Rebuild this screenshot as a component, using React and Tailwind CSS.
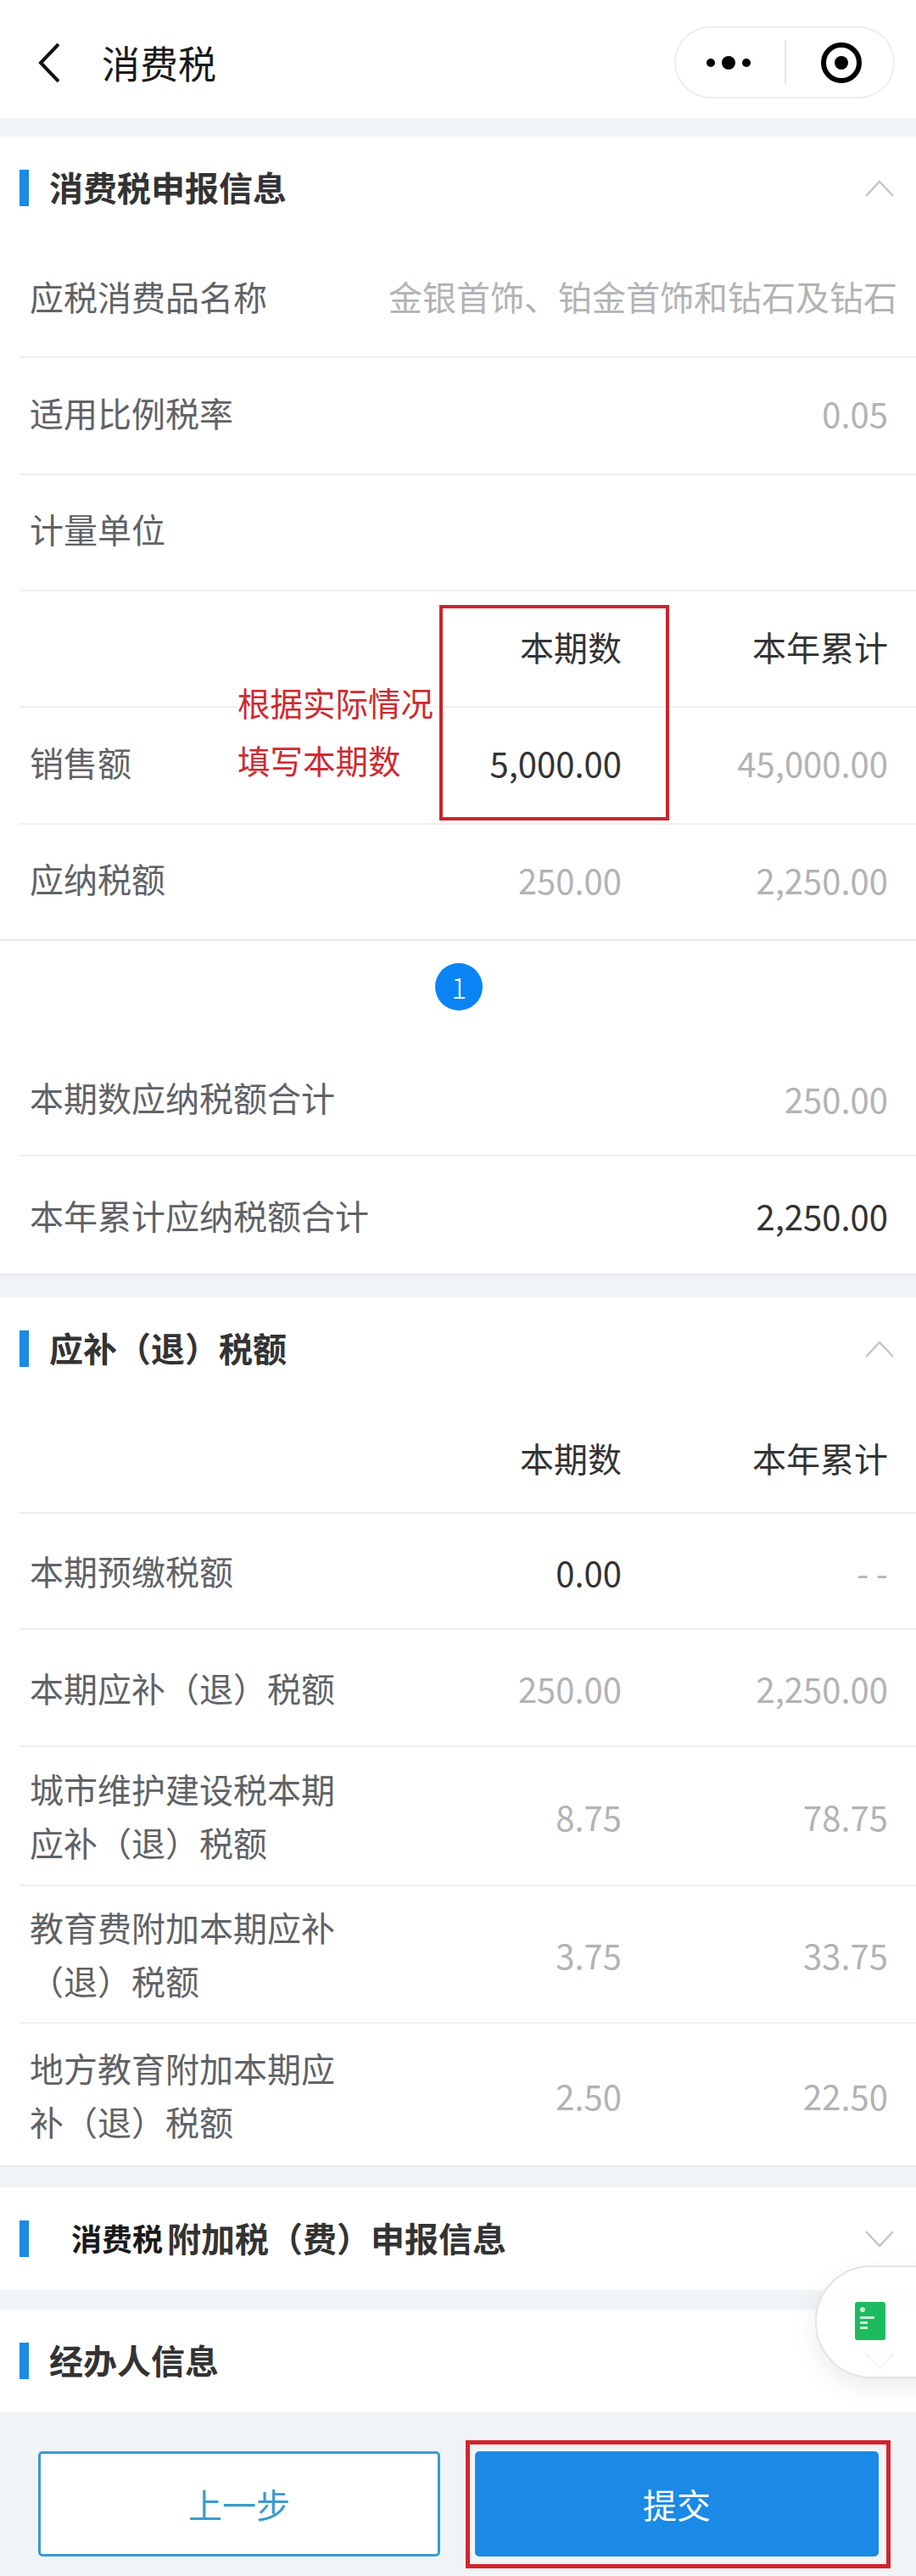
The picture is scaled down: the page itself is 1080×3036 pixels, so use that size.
const tm = { dark: "text-[#333333]", gray: "text-[#b2b3b5]" };

function Chevron({ down }) {
  return (
    <svg width="34" height="20" viewBox="0 0 34 20" fill="none" className="shrink-0">
      <path d={down ? "M1 1 L17 18 L33 1" : "M1 19 L17 2 L33 19"} stroke="#c4c6c8" strokeWidth="2.5" />
    </svg>
  );
}

function SectionHead({ title, down, className = "" }) {
  return (
    <div className={`flex items-center justify-between pl-[23px] pr-[26px] ${className}`}>
      <div className="flex items-center">
        <div className="w-[11px] h-[43px] bg-[#1a8ae6]" />
        <div className="ml-[24px] -mt-[4px] text-[40px] leading-[48px] font-bold text-[#333333]">{title}</div>
      </div>
      <Chevron down={down} />
    </div>
  );
}

function Row({ label, mid, midTone = "gray", right, rightTone = "gray", h = "h-[137px]", last, up, nowrap }) {
  return (
    <div className={`ml-[23px] pl-[12px] pr-[33px] flex items-center ${h} ${up ? "pb-[8px]" : ""} ${last ? "" : "border-b-2 border-[#efefef]"}`}>
      <div className={`w-[362px] mr-[86px] shrink-0 text-[40px] leading-[63px] text-[#606266] ${nowrap ? "whitespace-nowrap" : ""}`}>{label}</div>
      <div className={`w-[250px] shrink-0 text-right text-[40px] pt-[2px] ${tm[midTone]}`}>{mid}</div>
      <div className={`w-[314px] shrink-0 text-right text-[40px] pt-[2px] ${tm[rightTone]}`}>{right}</div>
    </div>
  );
}

export default function App() {
  return (
    <div className="relative w-[1080px] h-[3036px] overflow-hidden bg-[#f0f4f7] font-['Noto_Sans_CJK_SC','Noto_Sans',sans-serif]">
      {/* nav */}
      <div className="h-[139px] bg-white flex items-center justify-between pl-[45px] pr-[25px] pt-[8px]">
        <div className="flex items-center">
          <svg width="26" height="46" viewBox="0 0 26 46" fill="none">
            <path d="M24 1 L3 23 L24 45" stroke="#111111" strokeWidth="4" />
          </svg>
          <div className="ml-[49px] text-[45px] leading-[60px] text-[#1a1a1a]">消费税</div>
        </div>
        <div className="w-[260px] h-[85px] rounded-[43px] border-2 border-[#eeeeee] flex items-center">
          <div className="w-[128px] flex items-center justify-center pr-[5px] gap-[8px]">
            <div className="w-[10px] h-[10px] rounded-full bg-black" />
            <div className="w-[16px] h-[16px] rounded-full bg-black" />
            <div className="w-[10px] h-[10px] rounded-full bg-black" />
          </div>
          <div className="w-[2px] h-[51px] bg-[#e5e5e5]" />
          <div className="flex-1 flex items-center justify-center pl-[4px]">
            <svg width="48" height="48" viewBox="0 0 48 48">
              <circle cx="24" cy="24" r="21" fill="none" stroke="#000000" strokeWidth="6" />
              <circle cx="24" cy="24" r="8" fill="#000000" />
            </svg>
          </div>
        </div>
      </div>

      {/* section 1 */}
      <div className="mt-[22px] bg-white border-b-2 border-[#e8e8e8]">
        <SectionHead title="消费税申报信息" className="h-[124px] pb-[3px]" />
        <div className="ml-[23px] pl-[12px] pb-[8px] flex items-center h-[137px] border-b-2 border-[#efefef]">
          <div className="w-[423px] shrink-0 text-[40px] text-[#606266]">应税消费品名称</div>
          <div className="w-[601px] overflow-hidden whitespace-nowrap text-[40px] text-[#b2b3b5]">金银首饰、铂金首饰和钻石及钻石饰品</div>
        </div>
        <Row up label="适用比例税率" right="0.05" h="h-[138px]" />
        <Row up label="计量单位" />
        <Row up mid="本期数" midTone="dark" right="本年累计" rightTone="dark" />
        <Row up label="销售额" mid="5,000.00" midTone="dark" right="45,000.00" h="h-[138px]" />
        <Row up label="应纳税额" mid="250.00" right="2,250.00" h="h-[135px]" last />
        <div className="border-t-2 border-[#e8e8e8] h-[119px] pb-[10px] pl-[2px] flex items-center justify-center">
          <div className="w-[56px] h-[56px] rounded-full bg-[#0a84f5] text-white text-[34px] font-light flex items-center justify-center">1</div>
        </div>
        <Row label="本期数应纳税额合计" right="250.00" />
        <Row label="本年累计应纳税额合计" right="2,250.00" rightTone="dark" h="h-[138px]" last nowrap />
      </div>

      {/* section 2 */}
      <div className="mt-[26px] bg-white border-b-2 border-[#e8e8e8]">
        <SectionHead title="应补（退）税额" className="h-[123px] pb-[2px]" />
        <Row mid="本期数" midTone="dark" right="本年累计" rightTone="dark" h="h-[132px]" />
        <Row label="本期预缴税额" mid="0.00" midTone="dark" right={<span className="tracking-[9px] mr-[-9px]">--</span>} />
        <Row label="本期应补（退）税额" mid="250.00" right="2,250.00" h="h-[138px]" />
        <Row label="城市维护建设税本期应补（退）税额" mid="8.75" right="78.75" h="h-[164px]" />
        <Row label="教育费附加本期应补（退）税额" mid="3.75" right="33.75" h="h-[162px]" />
        <Row label="地方教育附加本期应补（退）税额" mid="2.50" right="22.50" h="h-[167px]" last />
      </div>

      {/* section 3 */}
      <div className="mt-[24px] bg-white h-[121px] flex items-center justify-between pl-[23px] pr-[26px]">
        <div className="flex items-center">
          <div className="w-[11px] h-[43px] bg-[#1a8ae6]" />
          <div className="ml-[50px] -mt-[3px] flex items-center font-bold leading-[48px] text-[#333333]">
            <span className="text-[36px] text-[#1a1a1a] mr-[5px]">消费税</span>
            <span className="text-[40px]">附加税（费）申报信息</span>
          </div>
        </div>
        <Chevron down />
      </div>

      {/* section 4 */}
      <div className="mt-[23px] bg-white">
        <SectionHead title="经办人信息" down className="h-[121px]" />
      </div>

      {/* footer */}
      <div className="pt-[46px] pl-[45px] flex">
        <div className="w-[474px] h-[124px] rounded-[5px] border-[3px] border-[#3a9bcf] bg-white text-[#3a9bcf] text-[40px] flex items-center justify-center">上一步</div>
        <div className="ml-[41px] w-[476px] h-[124px] rounded-[5px] bg-[#1a8ae6] text-white text-[40px] flex items-center justify-center">提交</div>
      </div>

      {/* annotations overlaying the page */}
      <div className="absolute left-[518px] top-[713px] w-[271px] h-[254px] border-4 border-[#c9252e]" />
      <div className="absolute left-[549px] top-[2876px] w-[501px] h-[151px] border-[5px] border-[#d4232e]" />
      <div className="absolute left-[280px] top-[793px] text-[38.5px] leading-[68px] text-[#cf2a30]">
        <div>根据实际情况</div>
        <div>填写本期数</div>
      </div>

      {/* floating capsule */}
      <div className="absolute left-[961px] top-[2670px] w-[140px] h-[133px] rounded-l-[66px] border-2 border-[#e2e2e2] bg-white/80 shadow-[0_10px_30px_rgba(0,0,0,0.08)] flex items-center">
        <div className="ml-[45px] -mt-[2px] w-[36px] h-[45px] rounded-[3px] bg-[#1dbb5e] flex flex-col pl-[6px] pt-[6px]">
          <div className="w-[6px] h-[6px] rounded-full bg-[#c8f0d8]" />
          <div className="mt-[5px] w-[17px] h-[3px] bg-[#c8f0d8]" />
          <div className="mt-[3px] w-[9px] h-[3px] bg-[#c8f0d8]" />
          <div className="mt-[3px] w-[9px] h-[3px] bg-[#c8f0d8]" />
        </div>
      </div>
    </div>
  );
}
